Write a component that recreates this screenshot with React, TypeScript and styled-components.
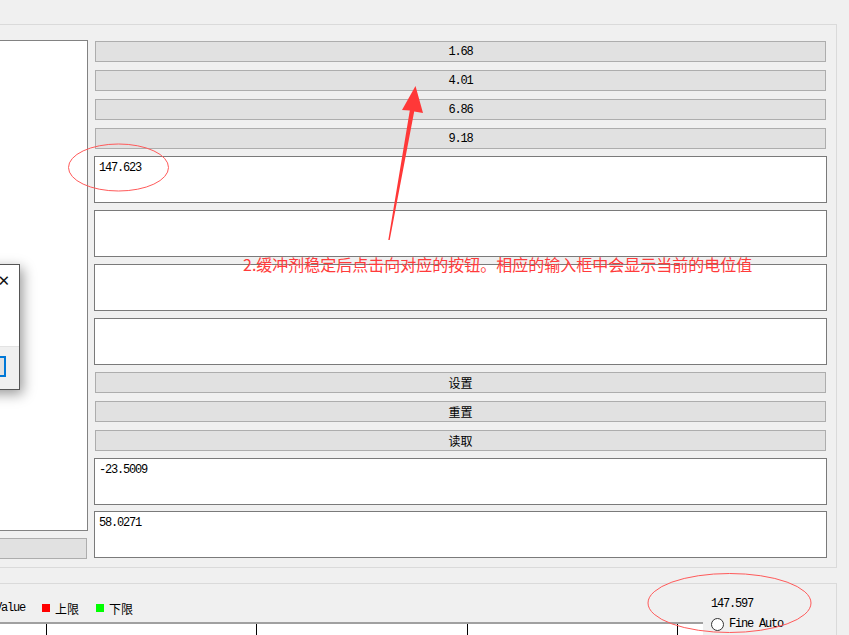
import React from "react";
import styled, { createGlobalStyle } from "styled-components";

const Global = createGlobalStyle`
  html, body { margin: 0; padding: 0; background: #f0f0f0; }
  body { font-family: "Liberation Mono", "Noto Sans CJK SC", monospace; }
`;

const mono = `"Liberation Mono", "Noto Sans CJK SC", monospace`;
const cjk = `"Noto Sans CJK SC", "Liberation Sans", sans-serif`;

const Screen = styled.div`
  position: relative;
  width: 849px;
  height: 635px;
  overflow: hidden;
  background: #f0f0f0;
`;

const TopPanel = styled.div`
  box-sizing: border-box;
  margin-top: 24px;
  width: 837px;
  height: 544px;
  border-top: 1px solid #dadada;
  border-right: 1px solid #dadada;
  border-bottom: 1px solid #dadada;
  display: flex;
  padding: 15px 9px 0 0;
`;

const LeftCol = styled.div`
  margin-left: -12px;
  width: 100px;
  display: flex;
  flex-direction: column;
  margin-right: 6px;
`;

const ListBox = styled.div`
  box-sizing: border-box;
  height: 491px;
  background: #fff;
  border: 1px solid #828282;
`;

const LeftButton = styled.div`
  box-sizing: border-box;
  margin-top: 7px;
  margin-right: 1px;
  height: 21px;
  background: #e1e1e1;
  border: 1px solid #adadad;
`;

const RightCol = styled.div`
  width: 733px;
  display: flex;
  flex-direction: column;
  padding-top: 1px;
`;

const Button = styled.div<{ $gap?: number }>`
  box-sizing: border-box;
  height: 21px;
  margin: ${(p) => p.$gap ?? 8}px 1px 0 1px;
  background: #e1e1e1;
  border: 1px solid #adadad;
  display: flex;
  align-items: center;
  justify-content: center;
  font-family: ${mono};
  font-size: 12px;
  letter-spacing: -1.2px;
  color: #000;
  &:first-child { margin-top: 0; }
`;

const CnLabel = styled.span`
  font-family: ${cjk};
  font-size: 12px;
  letter-spacing: 0;
  line-height: 12px;
`;

const TextBox = styled.div<{ $gap?: number }>`
  box-sizing: border-box;
  height: 47px;
  margin-top: ${(p) => p.$gap ?? 7}px;
  background: #fff;
  border: 1px solid #7a7a7a;
  padding: 4px 0 0 4px;
  font-family: ${mono};
  font-size: 12px;
  letter-spacing: -1.2px;
  line-height: 14px;
  color: #000;
`;

const BottomPanel = styled.div`
  box-sizing: border-box;
  margin-top: 15px;
  width: 837px;
  height: 60px;
  border-top: 1px solid #dadada;
  border-right: 1px solid #dadada;
  display: flex;
`;

const ChartArea = styled.div`
  width: 703px;
  display: flex;
  flex-direction: column;
`;

const Legend = styled.div`
  display: flex;
  align-items: center;
  height: 14px;
  margin-top: 17px;
  margin-left: -5px;
  font-family: ${mono};
  font-size: 12px;
  letter-spacing: -1.2px;
  color: #000;
`;

const Swatch = styled.span<{ $color: string }>`
  width: 8px;
  height: 8px;
  background: ${(p) => p.$color};
  margin: 0 5px 0 17px;
`;

const LegendText = styled.span`
  font-family: ${cjk};
  font-size: 12px;
  letter-spacing: 0;
`;

const Axis = styled.div`
  margin-top: 7px;
  border-top: 2px solid #a0a0a0;
  background: #fff;
  display: flex;
  height: 20px;
`;

const TickCell = styled.div<{ $w: number }>`
  width: ${(p) => p.$w}px;
  flex: none;
  border-right: 1px solid #000;
  box-sizing: border-box;
`;

const Side = styled.div`
  display: flex;
  flex-direction: column;
  padding-left: 8px;
  font-family: ${mono};
  font-size: 12px;
  letter-spacing: -1.2px;
  color: #000;
`;

const SideValue = styled.div`
  margin-top: 13px;
  height: 14px;
  line-height: 14px;
`;

const RadioRow = styled.div`
  display: flex;
  align-items: center;
  margin-top: 5px;
  height: 16px;
`;

const RadioCircle = styled.span`
  box-sizing: border-box;
  width: 13px;
  height: 13px;
  border-radius: 50%;
  border: 1px solid #333;
  background: #fff;
  margin-right: 5px;
`;

const Dialog = styled.div`
  position: absolute;
  left: -200px;
  top: 264px;
  width: 220px;
  height: 126px;
  box-sizing: border-box;
  border: 1px solid #555;
  background: #fff;
  box-shadow: 3px 4px 12px rgba(0, 0, 0, 0.4);
  display: flex;
  flex-direction: column;
`;

const DialogBody = styled.div`
  flex: 1;
  display: flex;
  justify-content: flex-end;
  padding: 9px 9px 0 0;
  font-family: "DejaVu Sans", sans-serif;
  font-size: 15px;
  line-height: 14px;
  color: #111;
`;

const DialogFooter = styled.div`
  height: 43px;
  background: #f0f0f0;
  border-top: 1px solid #e3e3e3;
  display: flex;
  justify-content: flex-end;
  padding: 9px 13px 0 0;
  box-sizing: border-box;
`;

const DialogButton = styled.div`
  width: 70px;
  height: 21px;
  box-sizing: border-box;
  border: 2px solid #0078d7;
  background: #e1e1e1;
`;

const Overlay = styled.svg`
  position: absolute;
  left: 0;
  top: 0;
  pointer-events: none;
`;

const Note = styled.div`
  position: absolute;
  left: 243px;
  top: 256px;
  font-family: ${cjk};
  font-size: 16px;
  line-height: 16px;
  color: #ff3b3b;
  white-space: nowrap;
`;

const valueButtons = ["1.68", "4.01", "6.86", "9.18"];

export default function App() {
  return (
    <>
      <Global />
      <Screen>
        <TopPanel>
          <LeftCol>
            <ListBox />
            <LeftButton />
          </LeftCol>
          <RightCol>
            {valueButtons.map((v) => (
              <Button key={v}>{v}</Button>
            ))}
            <TextBox>147.623</TextBox>
            <TextBox />
            <TextBox />
            <TextBox />
            <Button $gap={7}>
              <CnLabel>设置</CnLabel>
            </Button>
            <Button>
              <CnLabel>重置</CnLabel>
            </Button>
            <Button>
              <CnLabel>读取</CnLabel>
            </Button>
            <TextBox>-23.5009</TextBox>
            <TextBox $gap={6}>58.0271</TextBox>
          </RightCol>
        </TopPanel>
        <BottomPanel>
          <ChartArea>
            <Legend>
              <span>Value</span>
              <Swatch $color="#ff0000" />
              <LegendText>上限</LegendText>
              <Swatch $color="#00ff00" />
              <LegendText>下限</LegendText>
            </Legend>
            <Axis>
              <TickCell $w={47} />
              <TickCell $w={210} />
              <TickCell $w={211} />
              <TickCell $w={210} />
            </Axis>
          </ChartArea>
          <Side>
            <SideValue>147.597</SideValue>
            <RadioRow>
              <RadioCircle />
              <span>Fine Auto</span>
            </RadioRow>
          </Side>
        </BottomPanel>

        <Dialog>
          <DialogBody>✕</DialogBody>
          <DialogFooter>
            <DialogButton />
          </DialogFooter>
        </Dialog>

        <Overlay width="849" height="635" viewBox="0 0 849 635">
          <ellipse cx="118.5" cy="167.5" rx="50" ry="23.5" fill="none" stroke="#ff5a5a" strokeWidth="1" />
          <ellipse cx="729.5" cy="603" rx="81.5" ry="29.5" fill="none" stroke="#ff5a5a" strokeWidth="1" />
          <polygon
            points="388.3,239.9 409.8,110.6 402,110 415.5,86 423,113 414.2,111.4 389.7,240.1"
            fill="#ff3838"
          />
        </Overlay>
        <Note>2.缓冲剂稳定后点击向对应的按钮。相应的输入框中会显示当前的电位值</Note>
      </Screen>
    </>
  );
}
